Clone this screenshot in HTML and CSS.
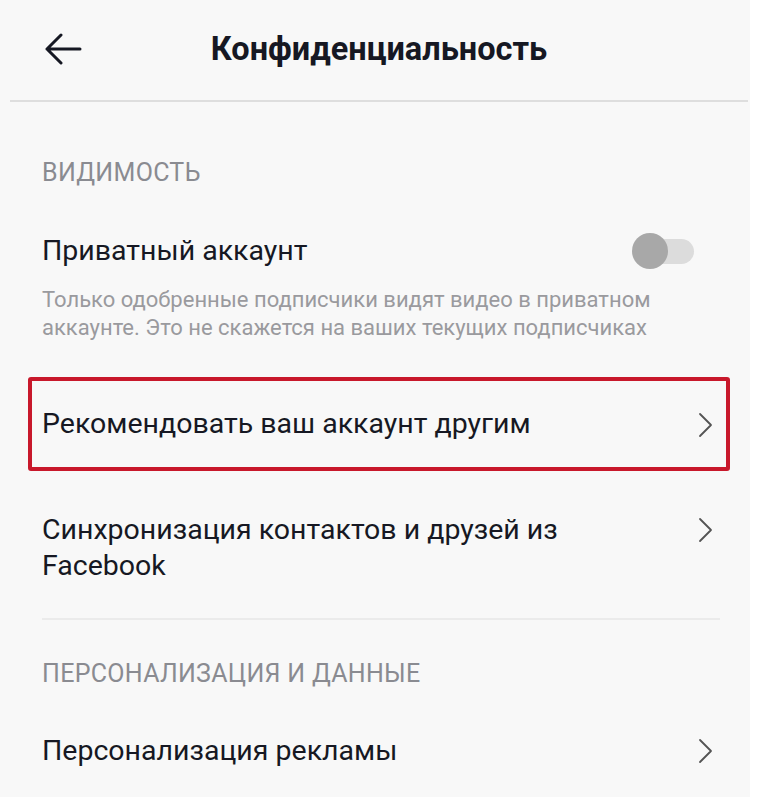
FILE: index.html
```html
<!DOCTYPE html>
<html lang="ru">
<head>
<meta charset="utf-8">
<title>Конфиденциальность</title>
<link rel="stylesheet" href="styles.css">
</head>
<body>
<div class="screen">
  <header class="header">
    <div class="back">
      <svg width="38" height="32" viewBox="0 0 38 32" aria-hidden="true">
        <path d="M36 16H3M17 2L3 16l14 14" fill="none" stroke="#161823" stroke-width="3" stroke-linecap="round" stroke-linejoin="round"/>
      </svg>
    </div>
    <h1 class="title">Конфиденциальность</h1>
    <div></div>
  </header>

  <main class="content">
    <div class="section-title first">ВИДИМОСТЬ</div>

    <div class="row toggle-row">
      <span class="row-label">Приватный аккаунт</span>
      <span class="toggle"><span class="knob"></span></span>
    </div>
    <p class="desc">Только одобренные подписчики видят видео в приватном аккаунте. Это не скажется на ваших текущих подписчиках</p>

    <div class="row highlighted">
      <span class="row-label">Рекомендовать ваш аккаунт другим</span>
      <svg class="chev" width="16" height="26" viewBox="0 0 16 26" aria-hidden="true"><path d="M2 2l11 11L2 24" fill="none" stroke="#545454" stroke-width="1.8" stroke-linecap="round" stroke-linejoin="round"/></svg>
    </div>

    <div class="row multi">
      <span class="row-label">Синхронизация контактов и друзей из Facebook</span>
      <svg class="chev" width="16" height="26" viewBox="0 0 16 26" aria-hidden="true"><path d="M2 2l11 11L2 24" fill="none" stroke="#545454" stroke-width="1.8" stroke-linecap="round" stroke-linejoin="round"/></svg>
    </div>

    <hr class="divider">

    <div class="section-title second">ПЕРСОНАЛИЗАЦИЯ И ДАННЫЕ</div>

    <div class="row last">
      <span class="row-label">Персонализация рекламы</span>
      <svg class="chev" width="16" height="26" viewBox="0 0 16 26" aria-hidden="true"><path d="M2 2l11 11L2 24" fill="none" stroke="#545454" stroke-width="1.8" stroke-linecap="round" stroke-linejoin="round"/></svg>
    </div>
  </main>
</div>
</body>
</html>
```

FILE: styles.css
```css
* { box-sizing: border-box; }

html, body {
  margin: 0;
  padding: 0;
  background: #ffffff;
}

body {
  font-family: Roboto, "Liberation Sans", Arial, sans-serif;
  color: #161823;
}

.screen {
  width: 750px;
  height: 797px;
  background: #f8f8f8;
  overflow: hidden;
}

.header {
  display: grid;
  grid-template-columns: 1fr auto 1fr;
  align-items: center;
  height: 102px;
  margin: 0 2px 0 10px;
  border-bottom: 2px solid #dedede;
  padding-bottom: 2px;
}

.back {
  padding-left: 34px;
  display: flex;
  align-items: center;
}

.back svg { display: block; }

.title {
  margin: 0;
  font-size: 32.5px;
  font-weight: 700;
  letter-spacing: 0;
  color: #161823;
  line-height: 40px;
}

.content {
  padding-left: 42px;
}

.section-title {
  font-size: 25px;
  line-height: 32px;
  color: #8a8b91;
  letter-spacing: 0.3px;
}

.section-title.first { margin-top: 55px; }
.section-title.second { margin-top: 38px; }

.row {
  display: flex;
  justify-content: space-between;
  align-items: flex-start;
  padding-right: 36px;
}

.row-label {
  font-size: 28.5px;
  line-height: 36px;
  color: #161823;
}

.toggle-row {
  margin-top: 44px;
  align-items: center;
  padding-right: 55px;
}

.toggle {
  position: relative;
  width: 63px;
  height: 36px;
  display: flex;
  align-items: center;
}

.toggle::before {
  content: "";
  display: block;
  margin-left: 14px;
  width: 48px;
  height: 25px;
  border-radius: 13px;
  background: #dcdcdc;
}

.knob {
  position: absolute;
  left: 0;
  top: 0;
  width: 36px;
  height: 36px;
  border-radius: 50%;
  background: #a8a8a8;
}

.desc {
  margin: 17px 0 0;
  font-size: 22px;
  line-height: 28px;
  color: #9a9a9e;
  max-width: 640px;
}

.highlighted {
  margin: 35px 20px 0 -14px;
  height: 94px;
  border: 4px solid #c8182b;
  border-radius: 3px;
  padding: 0 12px 0 10px;
  align-items: center;
}

.chev {
  display: block;
  flex: none;
  margin-top: 5px;
}

.highlighted .chev { margin-top: 2px; }

.multi {
  margin-top: 41px;
}

.multi .row-label {
  max-width: 560px;
}

.divider {
  margin: 34px 30px 0 0;
  border: 0;
  border-top: 2px solid #ebebeb;
  height: 0;
}

.last {
  margin-top: 43px;
}
```
